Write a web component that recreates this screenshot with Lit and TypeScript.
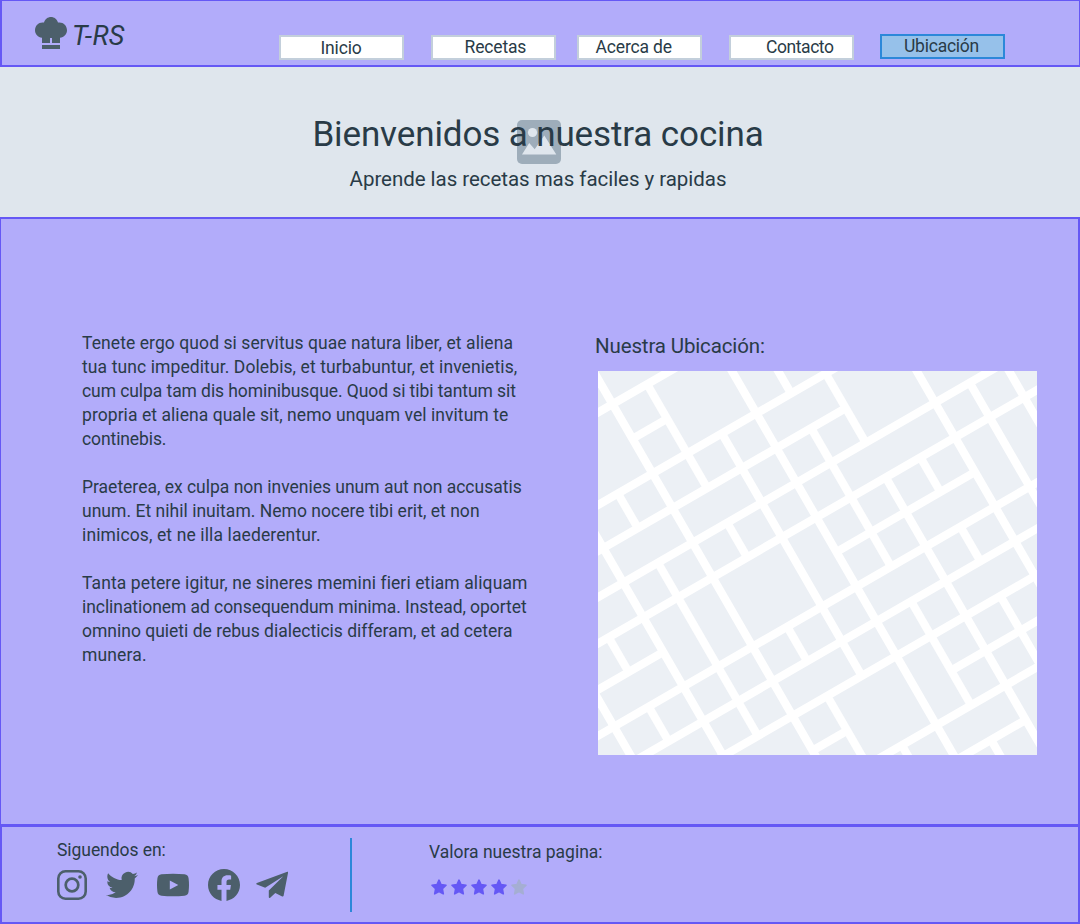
import { LitElement, html, svg, css } from "lit";
import { customElement } from "lit/decorators.js";

type Line = [text: string, tracking: number];

const PARAGRAPHS: Line[][] = [
  [
    ["Tenete ergo quod si servitus quae natura liber, et aliena", 0.08],
    ["tua tunc impeditur. Dolebis, et turbabuntur, et invenietis,", 0.1],
    ["cum culpa tam dis hominibusque. Quod si tibi tantum sit", -0.076],
    ["propria et aliena quale sit, nemo unquam vel invitum te", 0.058],
    ["continebis.", -0.1],
  ],
  [
    ["Praeterea, ex culpa non invenies unum aut non accusatis", -0.01],
    ["unum. Et nihil inuitam. Nemo nocere tibi erit, et non", 0.03],
    ["inimicos, et ne illa laederentur.", 0.12],
  ],
  [
    ["Tanta petere igitur, ne sineres memini fieri etiam aliquam", 0.1],
    ["inclinationem ad consequendum minima. Instead, oportet", -0.06],
    ["omnino quieti de rebus dialecticis differam, et ad cetera", 0],
    ["munera.", 0.15],
  ],
];

// Streets sit on a 40px grid turned by -30 degrees: [line, from, to] in grid units.
const ALONG: number[][] = [
  [1, -6, 12], [2, 0, 1], [3, -6, 12], [4, -6, 5], [5, -6, 12], [6, -6, 12],
  [7, -6, -2], [7, 3, 7], [8, -6, 12], [9, -6, 12], [10, -6, 12],
  [11, 0, 1], [11, 4, 12], [12, -6, 12], [13, -6, 5],
];
const ACROSS: number[][] = [
  [-4, 7, 10], [-3, 6, 7], [-3, 8, 9], [-2, 3, 11], [-1, 3, 4], [-1, 5, 10],
  [0, 0, 12], [1, 1, 4], [1, 5, 6], [1, 8, 9], [1, 10, 14], [2, 3, 10], [2, 12, 15],
  [3, 0, 15], [4, 0, 3], [4, 4, 8], [4, 9, 12], [4, 13, 16], [5, 3, 5], [5, 6, 16],
  [6, 6, 7], [6, 8, 9], [6, 10, 14], [7, 0, 12], [8, 5, 9], [9, 4, 9],
];
const at = (n: number) => n * 40 - 4;

@customElement("street-map")
class StreetMap extends LitElement {
  static styles = css`
    :host { display: block; width: 439px; height: 384px; }
    svg { display: block; }
  `;
  render() {
    return html`<svg width="439" height="384" viewBox="0 0 439 384">
      <rect width="439" height="384" fill="#ecf0f5" />
      <g transform="rotate(-30)" stroke="#fff" stroke-width="8.2">
        ${ALONG.map(([j, a, b]) => svg`<line x1=${at(a)} y1=${at(j)} x2=${at(b)} y2=${at(j)} />`)}
        ${ACROSS.map(([i, a, b]) => svg`<line x1=${at(i)} y1=${at(a)} x2=${at(i)} y2=${at(b)} />`)}
      </g>
    </svg>`;
  }
}

const star = (fill: string) => html`
  <svg width="16" height="16" viewBox="0 0 16 16" fill=${fill} stroke=${fill} stroke-width="1.6" stroke-linejoin="round">
    <path d="M8 1.200 10 5.600 15 6.300 11.400 9.800 12.300 14.800 8 12.600 3.700 14.800 4.600 9.800 1 6.300 6 5.600z" />
  </svg>`;

@customElement("app-root")
class AppRoot extends LitElement {
  static styles = css`
    :host {
      display: flex; flex-direction: column; height: 924px; width: 1080px;
      box-sizing: border-box; overflow: hidden;
      font-family: Roboto, "Liberation Sans", sans-serif; font-size: 17.5px; line-height: 24px;
      color: #293b47; background: #b2acfa;
    }
    * { box-sizing: border-box; margin: 0; font-weight: 400; }
    svg { display: block; flex: none; }
    header {
      height: 67px; flex: none; display: flex; align-items: flex-start;
      border: solid #6558f5; border-width: 1px 1px 2px 2px; padding-left: 33px;
    }
    .brand { display: flex; width: 244px; padding-top: 16px; }
    .brand span { font-size: 27px; font-style: italic; line-height: 38px; letter-spacing: .3px; margin-left: 5px; }
    nav { display: flex; padding-top: 34px; }
    .tab { width: 125px; height: 25px; border: 2px solid #c3cfdb; background: #fff; line-height: 20px; letter-spacing: -.15px; white-space: nowrap; }
    .inicio { padding-left: 39.5px; margin-right: 27px; line-height: 22px; }
    .recetas { padding-left: 31.5px; margin-right: 21px; }
    .acerca { padding-left: 16.5px; margin-right: 27px; }
    .contacto { padding-left: 35px; margin-right: 26px; letter-spacing: -.43px; }
    .activo { padding-left: 22px; margin-top: -1px; border-color: #2c88d9; background: #96c1ea; letter-spacing: -.24px; }
    .hero {
      height: 150px; flex: none; background: #dfe6ed; display: grid;
      grid-template-columns: 1fr; justify-items: center; align-content: start;
      padding: 46px 4px 0 0; position: relative;
    }
    .photo { position: absolute; left: 517px; top: 53px; }
    h1 { font-size: 35px; line-height: 44px; letter-spacing: -.12px; position: relative; }
    .hero p { font-size: 20.5px; line-height: 26px; letter-spacing: -.04px; margin-top: 9px; }
    main {
      height: 608px; flex: none; display: flex; border: solid #6558f5; border-width: 2px 2px 1px 1px;
      padding: 112px 0 0 81px;
    }
    .copy { width: 513px; }
    .copy p + p { margin-top: 24px; }
    .line { display: block; white-space: nowrap; }
    h2 { font-size: 20.5px; line-height: 30px; letter-spacing: -.14px; }
    street-map { margin: 10px 0 0 3px; }
    footer { flex: 1; display: flex; border: 2px solid #6558f5; padding: 11px 0 0 55px; }
    .social { width: 293px; }
    .social h3 { font-size: 17.5px; letter-spacing: -.06px; }
    .icons { display: flex; align-items: center; gap: 19px; height: 32px; margin-top: 7px; }
    .plane { margin-left: -3px; }
    .rule { width: 2px; height: 74px; background: #2c88d9; }
    .rating { padding: 2px 0 0 77px; }
    .rating h3 { font-size: 17.5px; letter-spacing: 0; }
    .stars { display: flex; gap: 4px; margin: 15px 0 0 2px; }
  `;

  render() {
    const ink = "#4c5f6b";
    return html`
      <header>
        <div class="brand">
          <svg width="32" height="32" viewBox="0 0 32 32" fill=${ink}>
            <path d="M16 0c3.200 0 6 2.200 7 5.500h1.500C28.600 5.500 32 8.900 32 13.200c0 3.900-3 7-7 7.500V26h-8v-5h-2v5H7v-5.300c-4-.5-7-3.600-7-7.500C0 8.900 3.400 5.500 7.500 5.500H9C10 2.200 12.800 0 16 0z" />
            <rect x="7" y="28" width="18" height="4" />
          </svg>
          <span>T-RS</span>
        </div>
        <nav>
          <div class="tab inicio">Inicio</div>
          <div class="tab recetas">Recetas</div>
          <div class="tab acerca">Acerca de</div>
          <div class="tab contacto">Contacto</div>
          <div class="tab activo">Ubicación</div>
        </nav>
      </header>
      <section class="hero">
        <svg class="photo" width="44" height="44" viewBox="0 0 44 44">
          <rect width="44" height="44" rx="5" fill="#9eadba" />
          <circle cx="15.500" cy="12.500" r="4.600" fill="#dfe6ed" />
          <path d="M5 34.500 12.200 23l5.500 6.300L27.300 15.500 39.300 34.500z" fill="#dfe6ed" />
        </svg>
        <h1>Bienvenidos a nuestra cocina</h1>
        <p>Aprende las recetas mas faciles y rapidas</p>
      </section>
      <main>
        <div class="copy">
          ${PARAGRAPHS.map(
            (p) => html`<p>${p.map(([t, ls]) => html`<span class="line" style="letter-spacing:${ls}px">${t}</span>`)}</p>`
          )}
        </div>
        <div>
          <h2>Nuestra Ubicación:</h2>
          <street-map></street-map>
        </div>
      </main>
      <footer>
        <div class="social">
          <h3>Siguendos en:</h3>
          <div class="icons">
            <svg width="30" height="30" viewBox="0 0 30 30" fill="none" stroke=${ink}>
              <rect x="1.300" y="1.300" width="27.400" height="27.400" rx="7.200" stroke-width="2.600" />
              <circle cx="15" cy="15" r="6.300" stroke-width="2.700" />
              <circle cx="23" cy="7" r="1.800" fill=${ink} stroke="none" />
            </svg>
            <svg width="32" height="32" viewBox="0 0 24 24" fill=${ink}>
              <path d="M23.953 4.570a10 10 0 01-2.825.775 4.958 4.958 0 002.163-2.723c-.951.555-2.005.959-3.127 1.184a4.920 4.920 0 00-8.384 4.482C7.690 8.095 4.067 6.130 1.640 3.162a4.822 4.822 0 00-.666 2.475c0 1.710.870 3.213 2.188 4.096a4.904 4.904 0 01-2.228-.616v.060a4.923 4.923 0 003.946 4.827 4.996 4.996 0 01-2.212.085 4.936 4.936 0 004.604 3.417 9.867 9.867 0 01-6.102 2.105c-.390 0-.779-.023-1.170-.067a13.995 13.995 0 007.557 2.209c9.053 0 13.998-7.496 13.998-13.985 0-.210 0-.420-.015-.630A9.935 9.935 0 0024 4.590z" />
            </svg>
            <svg width="32" height="32" viewBox="0 0 32 32" fill=${ink}>
              <path fill-rule="evenodd" d="M4.500 5.300Q16 4.300 27.500 5.300Q31.200 5.700 31.600 9.500Q32.400 16 31.600 22.500Q31.200 26.300 27.500 26.700Q16 27.700 4.500 26.700Q.8 26.300.4 22.500Q-.4 16 .4 9.500Q.8 5.700 4.500 5.300zM12.800 11.500v9L21.300 16z" />
            </svg>
            <svg width="32" height="32" viewBox="0 0 24 24" fill=${ink}>
              <path d="M24 12.073c0-6.627-5.373-12-12-12s-12 5.373-12 12c0 5.990 4.388 10.954 10.125 11.854v-8.385H7.078v-3.470h3.047V9.430c0-3.007 1.792-4.669 4.533-4.669 1.312 0 2.686.235 2.686.235v2.953H15.830c-1.491 0-1.956.925-1.956 1.874v2.250h3.328l-.532 3.470h-2.796v8.385C19.612 23.027 24 18.062 24 12.073z" />
            </svg>
            <svg class="plane" width="32" height="32" viewBox="0 0 32 32" fill=${ink}>
              <path d="M31.300 2.800c.5-.2.900.2.800.7L27.600 26.700c-.1.700-.8 1-1.400.7l-6.900-3.300-5.100 4.700c-.6.500-1.400.1-1.400-.6v-6.600L27.300 7.200 9.200 18.700.9 15.400c-.8-.3-.8-1.200 0-1.500z" />
            </svg>
          </div>
        </div>
        <div class="rule"></div>
        <div class="rating">
          <h3>Valora nuestra pagina:</h3>
          <div class="stars">
            ${[1, 2, 3, 4, 5].map((n) => star(n <= 4 ? "#6558f5" : "#a5aed3"))}
          </div>
        </div>
      </footer>
    `;
  }
}
